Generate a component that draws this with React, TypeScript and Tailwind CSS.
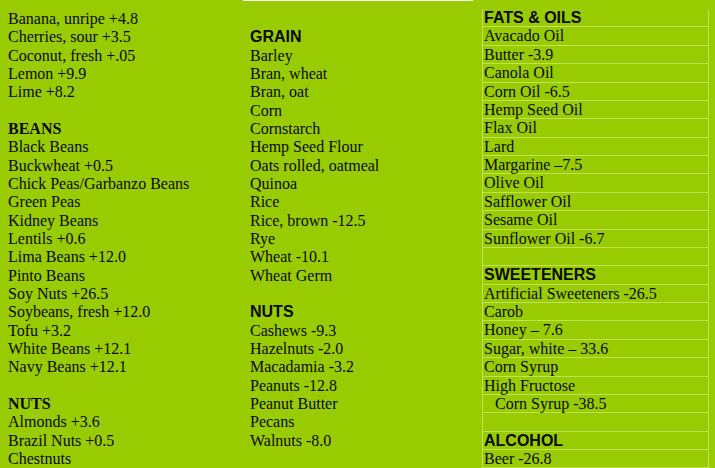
import React from "react";

type Line = { t: string; h?: "serif" | "sans"; indent?: boolean };

const col1: Line[] = [
  { t: "Banana, unripe +4.8" },
  { t: "Cherries, sour +3.5" },
  { t: "Coconut, fresh +.05" },
  { t: "Lemon +9.9" },
  { t: "Lime +8.2" },
  { t: "" },
  { t: "BEANS", h: "serif" },
  { t: "Black Beans" },
  { t: "Buckwheat +0.5" },
  { t: "Chick Peas/Garbanzo Beans" },
  { t: "Green Peas" },
  { t: "Kidney Beans" },
  { t: "Lentils +0.6" },
  { t: "Lima Beans +12.0" },
  { t: "Pinto Beans" },
  { t: "Soy Nuts +26.5" },
  { t: "Soybeans, fresh +12.0" },
  { t: "Tofu +3.2" },
  { t: "White Beans +12.1" },
  { t: "Navy Beans +12.1" },
  { t: "" },
  { t: "NUTS", h: "serif" },
  { t: "Almonds +3.6" },
  { t: "Brazil Nuts +0.5" },
  { t: "Chestnuts" },
];

const col2: Line[] = [
  { t: "" },
  { t: "GRAIN", h: "sans" },
  { t: "Barley" },
  { t: "Bran, wheat" },
  { t: "Bran, oat" },
  { t: "Corn" },
  { t: "Cornstarch" },
  { t: "Hemp Seed Flour" },
  { t: "Oats rolled, oatmeal" },
  { t: "Quinoa" },
  { t: "Rice" },
  { t: "Rice, brown -12.5" },
  { t: "Rye" },
  { t: "Wheat -10.1" },
  { t: "Wheat Germ" },
  { t: "" },
  { t: "NUTS", h: "sans" },
  { t: "Cashews -9.3" },
  { t: "Hazelnuts -2.0" },
  { t: "Macadamia -3.2" },
  { t: "Peanuts -12.8" },
  { t: "Peanut Butter" },
  { t: "Pecans" },
  { t: "Walnuts -8.0" },
];

const col3: Line[] = [
  { t: "FATS & OILS", h: "sans" },
  { t: "Avacado Oil" },
  { t: "Butter -3.9" },
  { t: "Canola Oil" },
  { t: "Corn Oil -6.5" },
  { t: "Hemp Seed Oil" },
  { t: "Flax Oil" },
  { t: "Lard" },
  { t: "Margarine \u20137.5" },
  { t: "Olive Oil" },
  { t: "Safflower Oil" },
  { t: "Sesame Oil" },
  { t: "Sunflower Oil -6.7" },
  { t: "" },
  { t: "SWEETENERS", h: "sans" },
  { t: "Artificial Sweeteners -26.5" },
  { t: "Carob" },
  { t: "Honey \u2013 7.6" },
  { t: "Sugar, white \u2013 33.6" },
  { t: "Corn Syrup" },
  { t: "High Fructose" },
  { t: "Corn Syrup -38.5", indent: true },
  { t: "" },
  { t: "ALCOHOL", h: "sans" },
  { t: "Beer -26.8" },
];

function cls(l: Line) {
  if (l.h === "sans") return "font-['Liberation_Sans',Arial,sans-serif] font-bold";
  if (l.h === "serif") return "font-bold";
  return "";
}

function PlainCol({ lines, className }: { lines: Line[]; className: string }) {
  return (
    <div className={className}>
      {lines.map((l, i) => (
        <div key={i} className={`h-[18.33px] leading-[18.33px] whitespace-nowrap ${cls(l)}`}>
          {l.t || "\u00a0"}
        </div>
      ))}
    </div>
  );
}

export default function App() {
  return (
    <div className="w-[715px] h-[468px] overflow-hidden bg-[#99cc00] text-[16px] text-[#0a0a00] font-['Liberation_Serif','Times_New_Roman',serif]">
      <div className="ml-[243px] w-[230px] h-px bg-white" />
      <div className="flex pt-[8px]">
        <PlainCol lines={col1} className="w-[243px] pl-2 pt-px" />
        <PlainCol lines={col2} className="w-[239px] pl-[7px] pt-px" />
        <div className="w-[227px] border-x border-[#c4e050]">
          {col3.map((l, i) => (
            <div
              key={i}
              className={`h-[18.375px] leading-[18.6px] border-b border-[#c4e050] whitespace-nowrap ${cls(l)} ${l.indent ? "pl-3" : "pl-px"}`}
            >
              {l.t || "\u00a0"}
            </div>
          ))}
        </div>
      </div>
    </div>
  );
}
